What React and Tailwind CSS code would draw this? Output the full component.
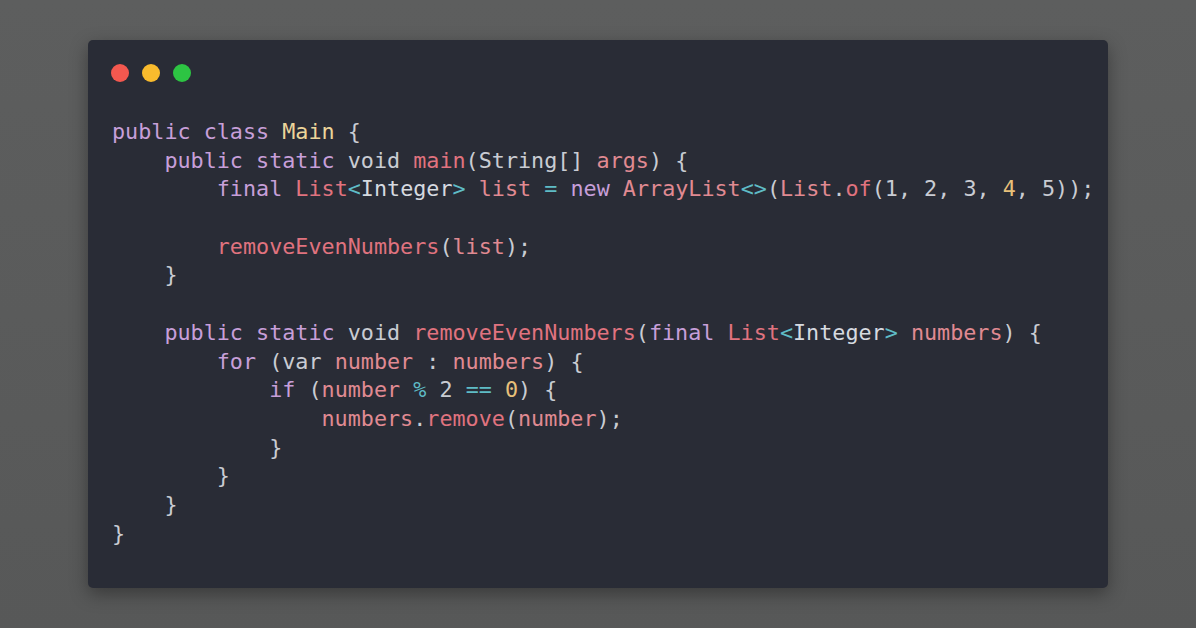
import React from "react";

const kw = "text-[#c79fd9]";
const fn = "text-[#e0737f]";
const vr = "text-[#e08a92]";
const ty = "text-[#d6dae0]";
const op = "text-[#5fbcc6]";
const pl = "text-[#c9ccd3]";
const cl = "text-[#ecd59a]";
const nu = "text-[#e8c07a]";

const lines = [
  [[kw, "public class "], [cl, "Main"], [pl, " {"]],
  [[pl, "    "], [kw, "public static "], [pl, "void "], [fn, "main"], [pl, "(String[] "], [vr, "args"], [pl, ") {"]],
  [
    [pl, "        "], [kw, "final "], [fn, "List"], [op, "<"], [ty, "Integer"], [op, ">"], [pl, " "], [vr, "list"],
    [pl, " "], [op, "="], [pl, " "], [kw, "new "], [vr, "ArrayList"], [op, "<>"], [pl, "("], [vr, "List"], [pl, "."],
    [fn, "of"], [pl, "(1, 2, 3, "], [nu, "4"], [pl, ", 5));"],
  ],
  [],
  [[pl, "        "], [fn, "removeEvenNumbers"], [pl, "("], [vr, "list"], [pl, ");"]],
  [[pl, "    }"]],
  [],
  [
    [pl, "    "], [kw, "public static "], [pl, "void "], [fn, "removeEvenNumbers"], [pl, "("], [kw, "final "],
    [fn, "List"], [op, "<"], [ty, "Integer"], [op, ">"], [pl, " "], [vr, "numbers"], [pl, ") {"],
  ],
  [[pl, "        "], [kw, "for "], [pl, "(var "], [vr, "number"], [pl, " : "], [vr, "numbers"], [pl, ") {"]],
  [[pl, "            "], [kw, "if "], [pl, "("], [vr, "number"], [pl, " "], [op, "%"], [pl, " 2 "], [op, "=="], [pl, " "], [nu, "0"], [pl, ") {"]],
  [[pl, "                "], [vr, "numbers"], [pl, "."], [fn, "remove"], [pl, "("], [vr, "number"], [pl, ");"]],
  [[pl, "            }"]],
  [[pl, "        }"]],
  [[pl, "    }"]],
  [[pl, "}"]],
];

export default function App() {
  return (
    <div className="w-[1196px] h-[628px] bg-gradient-to-b from-[#5d5e5e] to-[#575858] flex justify-center pt-[40px]">
      <div className="w-[1020px] h-[548px] bg-[#292c36] rounded-[5px] shadow-[0_6px_18px_rgba(0,0,0,0.35)] px-[22px] pt-[24px]">
        <div className="flex gap-[13px] pl-[1px]">
          <span className="w-[18px] h-[18px] rounded-full bg-[#f3584f]" />
          <span className="w-[18px] h-[18px] rounded-full bg-[#f9bb2d]" />
          <span className="w-[18px] h-[18px] rounded-full bg-[#2dc443]" />
        </div>
        <pre className="mt-[36px] pl-[2px] font-['DejaVu_Sans_Mono',monospace] text-[21.75px] leading-[28.7px] whitespace-pre">
          {lines.map((toks, i) => (
            <div key={i} className="h-[28.7px]">
              {toks.map(([c, t], j) => (
                <span key={j} className={c}>{t}</span>
              ))}
            </div>
          ))}
        </pre>
      </div>
    </div>
  );
}
